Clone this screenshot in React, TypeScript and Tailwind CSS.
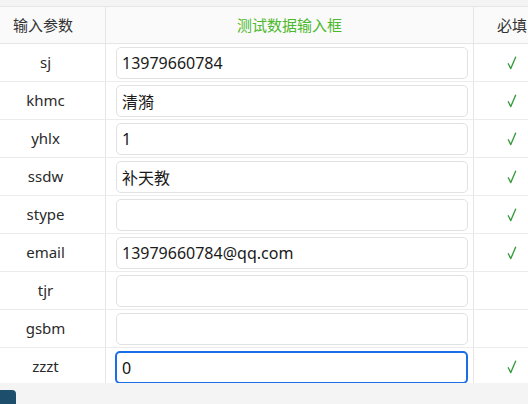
import React from "react";

type Row = { key: string; value: string; required: boolean; focused?: boolean };

const rows: Row[] = [
  { key: "sj", value: "13979660784", required: true },
  { key: "khmc", value: "清漪", required: true },
  { key: "yhlx", value: "1", required: true },
  { key: "ssdw", value: "补天教", required: true },
  { key: "stype", value: "", required: true },
  { key: "email", value: "13979660784@qq.com", required: true },
  { key: "tjr", value: "", required: false },
  { key: "gsbm", value: "", required: false },
  { key: "zzzt", value: "0", required: true, focused: true },
];

const font = {
  fontFamily: '"Segoe UI", "Noto Sans", "Noto Sans CJK SC", sans-serif',
};

// Small "√"-style tick for required fields
function Tick() {
  return (
    <svg width="10" height="14" viewBox="0 0 10 14" aria-hidden="true">
      <path
        d="M1.3 7.8 L3.8 12.6 L8.6 1.2"
        fill="none"
        stroke="#3a9c3f"
        strokeWidth="1.4"
        strokeLinecap="round"
        strokeLinejoin="round"
      />
    </svg>
  );
}

export default function App() {
  return (
    <div
      className="w-[528px] h-[404px] overflow-hidden bg-[#f4f4f4] pt-[6px]"
      style={font}
    >
      <div className="w-[548px] h-[377px] overflow-hidden border-t border-[#e6e6e6] bg-white">
        {/* header */}
        <div className="grid grid-cols-[106px_368px_74px] h-[37px] bg-[#fafafa] border-b border-[#e6e6e6] text-[15px]">
          <div className="flex items-center justify-center pr-[19px] border-r border-[#e6e6e6] text-[#333]">
            输入参数
          </div>
          <div className="flex items-center justify-center border-r border-[#e6e6e6] text-[#4cb82c]">
            测试数据输入框
          </div>
          <div className="flex items-center justify-center pl-[2px] text-[#333]">必填</div>
        </div>
        {/* body */}
        {rows.map((r) => (
          <div
            key={r.key}
            className="grid grid-cols-[106px_368px_74px] h-[38px] border-b border-[#ececec]"
          >
            <div className="flex items-center justify-center pr-[14px] border-r border-[#e6e6e6] text-[15px] text-[#2a2a2a]">
              {r.key}
            </div>
            <div className="border-r border-[#e6e6e6] pl-[10px] pr-[5px] pt-[3px]">
              <input
                readOnly
                value={r.value}
                className={
                  r.focused
                    ? "w-[353px] h-[33px] -ml-[1px] rounded-[5px] border-2 border-[#1a6fe8] px-[5px] text-[16px] text-[#111] bg-white outline-none"
                    : "w-[352px] h-[32px] rounded-[5px] border border-[#e2e2e2] px-[5px] text-[16px] text-[#1a1a1a] bg-white outline-none"
                }
                style={font}
              />
            </div>
            <div className="flex items-center justify-center pl-[2px] pt-[1px]">
              {r.required ? <Tick /> : null}
            </div>
          </div>
        ))}
      </div>
      <div className="mt-[7px] w-[16px] h-[20px] rounded-tr-[4px] bg-[#1d4e6b]" />
    </div>
  );
}
